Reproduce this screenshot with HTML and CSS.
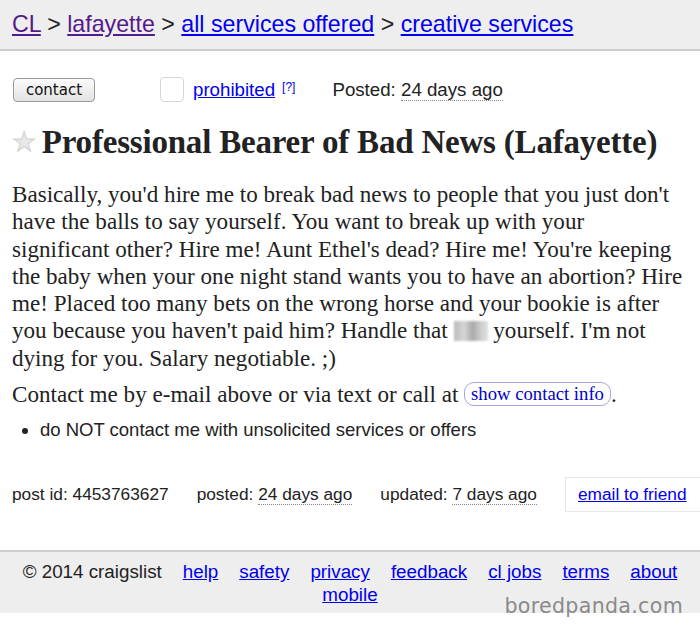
FILE: index.html
```html
<!DOCTYPE html>
<html>
<head>
<meta charset="utf-8">
<link rel="stylesheet" href="styles.css">
</head>
<body>
<header class="bchead">
  <a class="visited" href="#">CL</a> &gt; <a class="visited" href="#">lafayette</a> &gt; <a href="#">all services offered</a> &gt; <a href="#">creative services</a>
</header>
<section class="actions">
  <span class="btn">contact</span>
  <span class="flag">
    <span class="checkbox"></span>
    <a href="#">prohibited</a><sup class="help">[?]</sup>
  </span>
  <span class="posted">Posted: <span class="dotted">24 days ago</span></span>
</section>
<h2 class="title"><span class="star">&#9733;</span>Professional Bearer of Bad News (Lafayette)</h2>
<section class="body">
  <p class="para">Basically, you'd hire me to break bad news to people that you just don't have the balls to say yourself. You want to break up with your significant other? Hire me! Aunt Ethel's dead? Hire me! You're keeping the baby when your one night stand wants you to have an abortion? Hire me! Placed too many bets on the wrong horse and your bookie is after you because you haven't paid him? Handle that <span class="blur"></span> yourself. I'm not dying for you. Salary negotiable. ;)</p>
  <p class="contactline">Contact me by e-mail above or via text or call at <span class="showcontact">show contact info</span>.</p>
</section>
<ul class="notices">
  <li>do NOT contact me with unsolicited services or offers</li>
</ul>
<section class="postinfo">
  <span>post id: 4453763627</span>
  <span>posted: <span class="dotted">24 days ago</span></span>
  <span>updated: <span class="dotted">7 days ago</span></span>
  <span class="friend"><a href="#">email to friend</a></span>
</section>
<footer class="foot">
  <div class="links">
    <span class="copy">&copy; 2014 craigslist</span>
    <a href="#">help</a>
    <a href="#">safety</a>
    <a href="#">privacy</a>
    <a href="#">feedback</a>
    <a href="#">cl jobs</a>
    <a href="#">terms</a>
    <a href="#">about</a>
    <a href="#">mobile</a>
  </div>
  <div class="watermark">boredpanda.com</div>
</footer>
</body>
</html>
```
FILE: styles.css
```css
html, body {
  margin: 0;
  padding: 0;
  background: #fff;
}
body {
  width: 700px;
  height: 628px;
  overflow: hidden;
  font-family: "Liberation Sans", Arial, sans-serif;
  color: #222;
}
a {
  color: #0000ee;
}
a.visited {
  color: #551a8b;
}
.bchead {
  background: #eeeeee;
  border-bottom: 2px solid #cdcdcd;
  height: 51px;
  box-sizing: border-box;
  padding: 10px 12px 0;
  font-size: 23.2px;
  line-height: 28px;
}
.actions {
  display: flex;
  align-items: center;
  padding: 26px 13px 0;
  height: 25px;
  font-size: 18.7px;
}
.btn {
  display: inline-flex;
  align-items: center;
  justify-content: center;
  width: 80px;
  height: 22px;
  border: 1px solid #9a9a9a;
  border-radius: 4px;
  background: linear-gradient(#fbfbfb, #e2e2e2);
  font-family: "DejaVu Sans", sans-serif;
  font-size: 15px;
  color: #111;
}
.flag {
  display: inline-flex;
  align-items: center;
  margin-left: 65px;
}
.checkbox {
  display: inline-block;
  width: 22px;
  height: 23px;
  border: 1px solid #d6d6d6;
  border-radius: 4px;
  margin-right: 9px;
}
.help {
  font-size: 12px;
  color: #0000ee;
  margin-left: 7px;
  position: relative;
  top: -3px;
}
.posted {
  margin-left: 37px;
  color: #222;
}
.dotted {
  border-bottom: 1px dotted #888;
}
.title {
  margin: 21px 0 0;
  padding: 0 12px;
  font-family: "Liberation Serif", "Times New Roman", serif;
  font-size: 33px;
  line-height: 38px;
  font-weight: bold;
  color: #222;
  display: flex;
  align-items: center;
  letter-spacing: -0.2px;
}
.star {
  color: #e8e8e8;
  font-size: 27px;
  font-weight: normal;
  margin-right: 6px;
  -webkit-text-stroke: 1px #d2d2d2;
}
.body {
  margin-top: 20px;
  padding: 0 15px 0 12px;
  font-family: "Liberation Serif", "Times New Roman", serif;
  font-size: 23.1px;
  line-height: 27.3px;
  color: #222;
}
.para {
  margin: 0;
}
.contactline {
  margin: 9px 0 0;
}
.blur {
  display: inline-block;
  width: 34px;
  height: 20px;
  vertical-align: -3px;
  background: linear-gradient(90deg, #bbb 0%, #d6d6d6 30%, #aaa 55%, #cfcfcf 80%, #e0e0e0 100%);
  filter: blur(1px);
}
.showcontact {
  display: inline-block;
  font-size: 18.7px;
  line-height: 22px;
  color: #0000cc;
  border: 1px solid #a4a4e6;
  border-radius: 10px;
  padding: 0 6px;
  vertical-align: 2px;
}
.notices {
  margin: 11px 0 0;
  padding: 0 0 0 40px;
  font-size: 18.5px;
  line-height: 22px;
}
.postinfo {
  margin-top: 36px;
  display: flex;
  align-items: center;
  padding-left: 12px;
  font-size: 17.3px;
  gap: 28px;
}
.friend {
  margin-left: auto;
  border: 1px solid #e8e8e8;
  border-right: none;
  height: 35px;
  box-sizing: border-box;
  display: flex;
  align-items: center;
  padding-left: 12px;
  width: 135px;
}
.foot {
  margin-top: 38px;
  background: #eeeeee;
  border-top: 2px solid #cdcdcd;
  height: 63px;
  box-sizing: border-box;
  position: relative;
}
.links {
  padding: 8px 20px 0;
  display: flex;
  flex-wrap: wrap;
  justify-content: center;
  column-gap: 21px;
  font-size: 18.8px;
  line-height: 23px;
}
.watermark {
  position: absolute;
  right: 17px;
  top: 42px;
  font-family: "DejaVu Sans", sans-serif;
  font-size: 20.6px;
  line-height: 24px;
  color: #8a8a8a;
  letter-spacing: 0.3px;
}
```
